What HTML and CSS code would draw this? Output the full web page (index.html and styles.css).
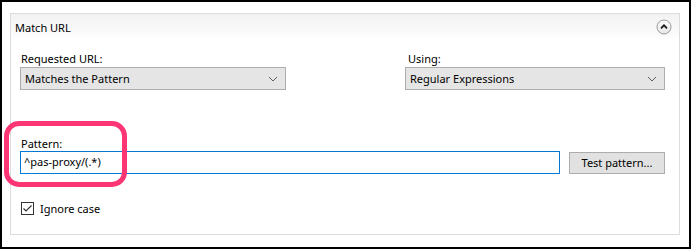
FILE: index.html
```html
<!DOCTYPE html>
<html>
<head>
<meta charset="utf-8">
<link rel="stylesheet" href="styles.css">
</head>
<body>
<div class="frame">
  <div class="panel">
    <div class="panel-header">
      <span class="panel-title">Match URL</span>
      <span class="collapse">
        <svg width="16" height="16" viewBox="0 0 16 16">
          <defs>
            <linearGradient id="cg" x1="0" y1="0" x2="0" y2="1">
              <stop offset="0" stop-color="#ffffff"/>
              <stop offset="1" stop-color="#e6e6e6"/>
            </linearGradient>
          </defs>
          <circle cx="8" cy="8" r="7" fill="url(#cg)" stroke="#9a9a9a" stroke-width="1"/>
          <path d="M5 9.3 L8 6.3 L11 9.3" fill="none" stroke="#1a1a1a" stroke-width="1.8"/>
        </svg>
      </span>
    </div>
    <div class="panel-body">
      <div class="row-two">
        <div class="field field-left">
          <label class="label">Requested URL:</label>
          <div class="select">
            <span>Matches the Pattern</span>
            <svg class="chev" width="10" height="6" viewBox="0 0 10 6"><path d="M1 1 L5 5 L9 1" fill="none" stroke="#5f5f5f" stroke-width="1"/></svg>
          </div>
        </div>
        <div class="field field-right">
          <label class="label label-using">Using:</label>
          <div class="select">
            <span>Regular Expressions</span>
            <svg class="chev" width="10" height="6" viewBox="0 0 10 6"><path d="M1 1 L5 5 L9 1" fill="none" stroke="#5f5f5f" stroke-width="1"/></svg>
          </div>
        </div>
      </div>
      <div class="pattern-block">
        <label class="label">Pattern:</label>
        <div class="pattern-row">
          <div class="input">^pas-proxy/(.*)</div>
          <div class="button">Test pattern...</div>
        </div>
        <div class="highlight"></div>
      </div>
      <div class="check-row">
        <span class="checkbox">
          <svg width="13" height="13" viewBox="0 0 13 13">
            <rect x="0.5" y="0.5" width="12" height="12" fill="#fff" stroke="#333"/>
            <path d="M2.5 6.5 L5 9 L10.5 3.5" fill="none" stroke="#333" stroke-width="1.2"/>
          </svg>
        </span>
        <span class="check-label">Ignore case</span>
      </div>
    </div>
  </div>
</div>
</body>
</html>
```

FILE: styles.css
```css
* { box-sizing: border-box; }
html, body { margin: 0; padding: 0; background: #fff; }
body {
  font-family: "Noto Sans", "Open Sans", sans-serif;
  font-size: 11px;
  color: #000;
}
.frame {
  width: 691px;
  height: 249px;
  border: 2px solid #000;
  padding: 11px 9px 12px 8px;
  background: #fff;
}
.panel {
  height: 222px;
  border: 1px solid #dcdcdc;
  display: flex;
  flex-direction: column;
}
.panel-header {
  height: 24px;
  display: flex;
  align-items: center;
  justify-content: space-between;
  padding: 0 7px 0 4px;
  background: linear-gradient(#f2f2f2, #fdfdfd);
}
.panel-title { line-height: 15px; padding-top: 2px; }
.collapse { display: flex; width: 16px; height: 16px; margin-top: 2px; }
.panel-body {
  padding: 13px 14px 0 9px;
  display: flex;
  flex-direction: column;
}
.row-two {
  display: flex;
  justify-content: space-between;
}
.field { display: flex; flex-direction: column; }
.field-left { width: 266px; }
.field-right { width: 260px; }
.label { line-height: 15px; height: 15px; padding-left: 1px; margin-bottom: 1px; }
.label-using { padding-left: 3px; }
.select {
  height: 23px;
  background: #e5e5e5;
  border: 1px solid #adadad;
  display: flex;
  align-items: center;
  justify-content: space-between;
  padding: 0 7px 0 4px;
}
.chev { display: block; }
.pattern-block {
  position: relative;
  margin-top: 46px;
}
.pattern-row {
  display: flex;
  align-items: center;
  gap: 9px;
  margin-top: 0;
}
.input {
  width: 540px;
  height: 23px;
  border: 1px solid #0078d7;
  background: #fff;
  line-height: 20px;
  padding-left: 3px;
}
.button {
  width: 96px;
  height: 22px;
  background: #e1e1e1;
  border: 1px solid #adadad;
  text-align: center;
  line-height: 19px;
}
.highlight {
  position: absolute;
  left: -16px;
  top: -15px;
  width: 123px;
  height: 66px;
  border: 5px solid #fc3575;
  border-radius: 15px;
}
.check-row {
  display: flex;
  align-items: center;
  margin-top: 27px;
  padding-left: 1px;
}
.checkbox { display: flex; width: 13px; height: 13px; }
.check-label { margin-left: 6px; line-height: 15px; }
```
